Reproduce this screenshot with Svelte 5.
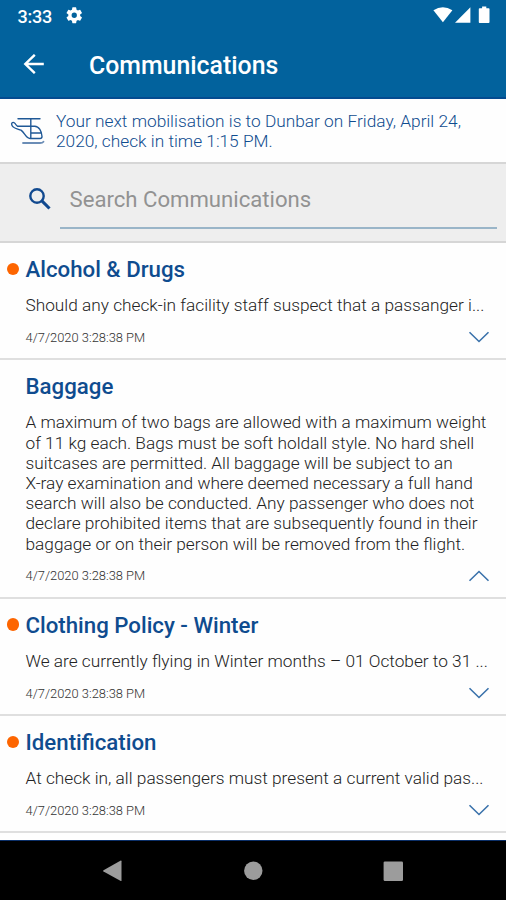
<script>
  const items = [
    { title: 'Alcohol & Drugs', unread: true, lines: ['Should any check-in facility staff suspect that a passanger i...'] },
    {
      title: 'Baggage',
      unread: false,
      open: true,
      lines: [
        'A maximum of two bags are allowed with a maximum weight',
        'of 11 kg each. Bags must be soft holdall style. No hard shell',
        'suitcases are permitted. All baggage will be subject to an',
        'X-ray examination and where deemed necessary a full hand',
        'search will also be conducted. Any passenger who does not',
        'declare prohibited items that are subsequently found in their',
        'baggage or on their person will be removed from the flight.'
      ]
    },
    { title: 'Clothing Policy - Winter', unread: true, lines: ['We are currently flying in Winter months – 01 October to 31 ...'] },
    { title: 'Identification', unread: true, lines: ['At check in, all passengers must present a current valid pas...'] }
  ];
</script>

<div class="screen">
  <header>
    <div class="status">
      <span class="time">3:33</span>
      <svg class="gear" width="16.5" height="16.5" viewBox="2 2 20 20"><path fill="#fff" d="M19.14 12.94c.04-.3.06-.61.06-.94 0-.32-.02-.64-.07-.94l2.03-1.58a.49.49 0 0 0 .12-.61l-1.92-3.32a.49.49 0 0 0-.59-.22l-2.39.96c-.5-.38-1.03-.7-1.62-.94l-.36-2.54a.48.48 0 0 0-.48-.41h-3.84a.47.47 0 0 0-.47.41l-.36 2.54c-.59.24-1.13.57-1.62.94l-2.39-.96a.48.48 0 0 0-.59.22L2.74 8.87a.47.47 0 0 0 .12.61l2.03 1.58c-.05.3-.09.63-.09.94s.02.64.07.94l-2.03 1.58a.49.49 0 0 0-.12.61l1.92 3.32c.12.22.37.29.59.22l2.39-.96c.5.38 1.03.7 1.62.94l.36 2.54c.05.24.24.41.48.41h3.84c.24 0 .44-.17.47-.41l.36-2.54c.59-.24 1.13-.56 1.62-.94l2.39.96c.22.08.47 0 .59-.22l1.92-3.32a.47.47 0 0 0-.12-.61zM12 15.2a3.2 3.2 0 1 1 0-6.4 3.2 3.2 0 0 1 0 6.4z" /></svg>
      <svg class="signals" width="58" height="20" viewBox="0 0 58 20">
        <g fill="#fff">
          <path d="M-.6 4.2Q8.9 -1.8 18.4 4.2L8.9 16.3Z" />
          <path d="M36.4 1.2V16.7H21Z" />
          <path d="M45.6 2.2h2.5V.6h4.2v1.6h2.4q.8 0 .8.8v13q0 .9-.8.9h-9.1q-.8 0-.8-.9V3q0-.8.8-.8Z" />
        </g>
      </svg>
    </div>
    <div class="appbar">
      <svg width="22" height="20" viewBox="0 0 22 20" fill="none" stroke="#fff" stroke-width="2.4"><path d="M20.8 10H2.5M11.8 .8L2.3 10l9.5 9.2" /></svg>
      <h1>Communications</h1>
    </div>
  </header>

  <section class="notice">
    <svg width="36" height="30" viewBox="0 0 36 30" fill="none" stroke="#1f5896" stroke-width="1.4" stroke-linecap="round" stroke-linejoin="round">
      <path d="M8 2.8H30M20.8 2.8V22.5M7.5 10.2H24.5C29 10 31.8 15.5 32 20.5Q32 22.5 30 22.5H20C16 22.5 14.5 16.5 11 14.2C7 12.8 3.5 12.5 2 9.5C0.8 7 2.7 5.5 4.6 7C6 8 6 10.2 8 10.2M21 17H31" />
      <path stroke="#6b8db6" stroke-width="1.8" d="M13 27H30Q32.5 27 33.5 25.7" />
    </svg>
    <p><span>Your next mobilisation is to Dunbar on Friday, April 24,</span><span>2020, check in time 1:15 PM.</span></p>
  </section>

  <section class="search">
    <svg width="24" height="24" viewBox="0 0 24 24" fill="none" stroke="#11498f"><circle cx="9" cy="9" r="6.7" stroke-width="2.4" /><path stroke-width="3.1" d="M13.9 13.9L21.5 21.5" /></svg>
    <div class="field">Search Communications</div>
  </section>

  <main>
    {#each items as item}
      <article>
        <h2>{#if item.unread}<i class="dot"></i>{/if}<span>{item.title}</span></h2>
        <div class="body">
          {#each item.lines as line}<span>{line}</span>{/each}
        </div>
        <footer>
          <time>4/7/2020 3:28:38 PM</time>
          <svg class:up={item.open} width="22" height="14" viewBox="0 0 22 14" fill="none" stroke="#3a72ab" stroke-width="1.6"><path d="M1.5 2.2L11 11.5L20.5 2.2" /></svg>
        </footer>
      </article>
    {/each}
  </main>

  <nav>
    <svg width="506" height="59" viewBox="0 0 506 59" fill="#9c9c9c">
      <path d="M103.5 29.2L120.8 19.6Q121.5 19.4 121.5 20.2V39.5Q121.5 40.3 120.8 40L103.5 30.6Q102.6 29.9 103.5 29.2Z" />
      <circle cx="253.3" cy="29.7" r="9.2" />
      <rect x="383.6" y="20.4" width="19.4" height="19.6" rx="1.3" />
    </svg>
  </nav>
</div>

<style>
  .screen {
    width: 506px;
    height: 900px;
    overflow: hidden;
    display: flex;
    flex-direction: column;
    background: #fefefe;
    font-family: Roboto, sans-serif;
  }
  header {
    height: 99px;
    box-sizing: border-box;
    flex: none;
    background: #02629d;
    border-bottom: 2px solid #044b90;
    color: #fff;
  }
  .status {
    height: 32px;
    display: flex;
    align-items: center;
    padding: 0 14px 0 17.5px;
  }
  .time {
    width: 48px;
    font-size: 18px;
    font-weight: 500;
    letter-spacing: -0.2px;
  }
  .gear { margin-top: -1px; }
  .signals { margin: -1px 0 0 auto; overflow: visible; }
  .appbar {
    height: 65px;
    display: flex;
    align-items: center;
    padding-left: 23px;
    gap: 44px;
  }
  h1 {
    margin: 3px 0 0;
    font-size: 24.85px;
    font-weight: 500;
    line-height: 30px;
  }
  .appbar svg { flex: none; margin-top: -1px; }
  .notice {
    height: 62.5px;
    flex: none;
    display: flex;
    padding: 12px 0 0 10px;
    box-sizing: border-box;
    gap: 10px;
    color: #0f4c8f;
  }
  .notice svg { flex: none; margin-top: 5px; }
  p { margin: 0; font-size: 17.3px; font-weight: 300; line-height: 20.2px; }
  p span, .body span { display: block; white-space: nowrap; }
  .search {
    height: 81.5px;
    flex: none;
    box-sizing: border-box;
    border-top: 2px solid #d6d6d6;
    border-bottom: 2px solid #d6d6d6;
    background: #eee;
    display: flex;
    padding: 0 9px 0 28px;
  }
  .search svg { flex: none; margin-top: 23.5px; }
  .field {
    flex: 1;
    height: 65px;
    box-sizing: border-box;
    margin-left: 8px;
    padding: 22px 0 0 9.5px;
    border-bottom: 2px solid #9ab5c8;
    color: #929292;
    font-size: 22.15px;
    line-height: 26px;
  }
  main { flex: 1; overflow: hidden; }
  article {
    padding: 13px 0 11.1px 25.5px;
    border-bottom: 2px solid #dfdfdf;
  }
  h2 {
    position: relative;
    margin: 0 0 13px;
    color: #0f4c8f;
    font-size: 22.25px;
    font-weight: 500;
    line-height: 26px;
  }
  .dot {
    position: absolute;
    left: -18.5px;
    top: 6.5px;
    width: 12.4px;
    height: 12.4px;
    border-radius: 50%;
    background: #fd6500;
  }
  .body {
    color: #222;
    font-size: 17.25px;
    font-weight: 300;
    line-height: 20.2px;
  }
  footer {
    height: 20px;
    margin-top: 12px;
    display: flex;
    align-items: center;
    justify-content: space-between;
    padding-right: 16px;
  }
  time { color: #333; font-size: 12.9px; font-weight: 300; }
  .up { transform: rotate(180deg); }
  nav {
    height: 60px;
    box-sizing: border-box;
    flex: none;
    border-top: 1px solid #0b2f68;
    background: #000;
  }
  nav svg { display: block; }
</style>
